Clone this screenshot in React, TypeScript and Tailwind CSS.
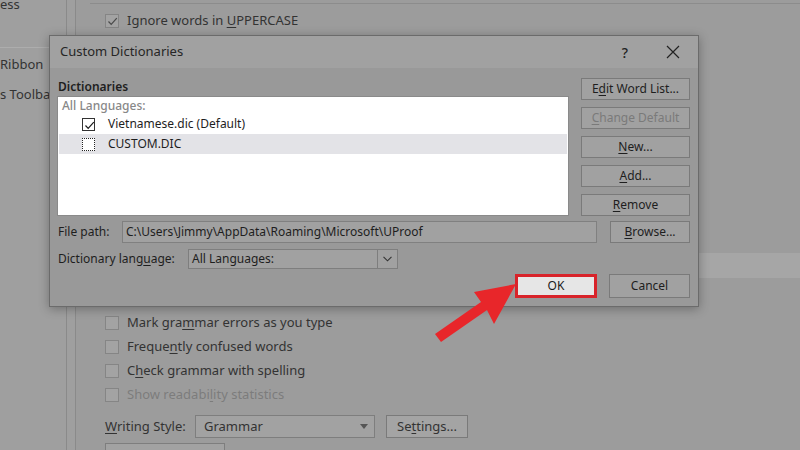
import React from "react";

function Check({ dim = false }: { dim?: boolean }) {
  return (
    <svg width="13" height="13" viewBox="0 0 13 13" className="absolute inset-0">
      <path d="M2.5 6.5 L5.2 9.4 L10.8 3.2" fill="none" stroke={dim ? "#4a4a4a" : "#1c1c1c"} strokeWidth="1.2" />
    </svg>
  );
}

function BgCheckbox({ checked = false }: { checked?: boolean }) {
  return (
    <span className="relative w-[14px] h-[14px] shrink-0 border border-[#858585] bg-[#a3a3a3]">
      {checked && <Check dim />}
    </span>
  );
}

function BgRow({ children, disabled = false }: { children: React.ReactNode; disabled?: boolean }) {
  return (
    <div className={`flex items-center gap-[8px] h-[24px] ${disabled ? "text-[#7c7c7c]" : "text-[#333333]"}`}>
      <BgCheckbox />
      <span>{children}</span>
    </div>
  );
}

function DlgButton({ children, disabled = false, className = "" }: { children: React.ReactNode; disabled?: boolean; className?: string }) {
  return (
    <div
      className={`flex items-center justify-center border border-[#7a7a7a] bg-[#a1a1a1] ${
        disabled ? "text-[#7a7a7a]" : "text-[#1e1e1e]"
      } ${className}`}
    >
      {children}
    </div>
  );
}

const U = ({ children }: { children: React.ReactNode }) => (
  <span className="underline underline-offset-[2px] decoration-1">{children}</span>
);

export default function App() {
  return (
    <div className="relative w-[800px] h-[450px] overflow-hidden bg-[#9c9c9c] text-[13px] text-[#333333] font-['Noto_Sans','Open_Sans',sans-serif]">
      {/* Word Options page behind the dialog */}
      <div className="flex h-full">
        <aside className="w-[67px] shrink-0 border-r border-[#8a8a8a] bg-[#9f9f9f] overflow-hidden">
          <div className="h-[48px] border-b border-[#adadad]">
            <div className="h-[10px] flex items-center">ess</div>
          </div>
          <div className="h-[30px] flex items-center mt-[2px]">Ribbon</div>
          <div className="h-[30px] flex items-center whitespace-nowrap">s Toolbar</div>
        </aside>
        <div className="w-[8px] shrink-0 bg-[#9f9f9f]" />
        <main className="flex-1 border-l border-[#8a8a8a]">
          <div className="ml-[14px] h-[4px] border-b border-[#8c8c8c]" />
          <div className="pl-[29px] mt-[5px]">
            <div className="flex items-center gap-[8px] h-[24px]">
              <BgCheckbox checked />
              <span>
                Ignore words in <U>U</U>PPERCASE
              </span>
            </div>
          </div>
          <div className="ml-[14px] mt-[220px] h-[25px] bg-[#a6a6a6]" />
          <div className="pl-[29px] mt-[33px]">
            <BgRow>
              Mark gra<U>m</U>mar errors as you type
            </BgRow>
            <BgRow>
              Freque<U>n</U>tly confused words
            </BgRow>
            <BgRow>
              C<U>h</U>eck grammar with spelling
            </BgRow>
            <BgRow disabled>
              Show readabi<U>l</U>ity statistics
            </BgRow>
            <div className="flex items-center h-[23px] mt-[8px]">
              <span className="w-[90px]">
                <U>W</U>riting Style:
              </span>
              <div className="w-[180px] h-[23px] border border-[#7e7e7e] bg-[#a2a2a2] flex items-center pl-[8px] pr-[6px]">
                <span className="flex-1">Grammar</span>
                <svg width="8" height="5" viewBox="0 0 8 5">
                  <path d="M0 0 H8 L4 5 Z" fill="#555555" />
                </svg>
              </div>
              <div className="ml-[11px] w-[82px] h-[23px] border border-[#7a7a7a] bg-[#a4a4a4] flex items-center justify-center">
                Se<U>t</U>tings...
              </div>
            </div>
            <div className="mt-[5px] w-[120px] h-[20px] border border-[#7e7e7e] bg-[#a2a2a2]" />
          </div>
        </main>
      </div>

      {/* Custom Dictionaries dialog */}
      <div className="absolute left-[49px] top-[35px] w-[650px] h-[272px] border border-[#6b6b6b] bg-[#999999] shadow-[0_2px_10px_rgba(0,0,0,0.3)] text-[12px] text-[#1e1e1e]">
        <div className="h-[32px] bg-[#a1a1a1] flex items-center pl-[10px] pr-[18px]">
          <span className="flex-1 text-[13px] text-[#262626]">Custom Dictionaries</span>
          <span className="text-[14px] font-medium text-[#222]">?</span>
          <svg width="14" height="14" viewBox="0 0 14 14" className="ml-[38px]">
            <path d="M1 1 L13 13 M13 1 L1 13" stroke="#222222" strokeWidth="1.2" />
          </svg>
        </div>

        <div className="px-[7px] pt-[10px]">
          <div className="flex gap-[12px]">
            <div className="w-[512px]">
              <div className="h-[18px] flex items-center font-semibold pl-[1px]">Dictionaries</div>
              <div className="h-[120px] bg-white border border-[#8a8a8a] p-[1px]">
                <div className="h-[16px] flex items-center pl-[3px] font-medium text-[#888888]">All Languages:</div>
                <div className="h-[20px] flex items-center pl-[23px] gap-[13px]">
                  <span className="relative w-[13px] h-[13px] border border-[#333333] bg-white">
                    <Check />
                  </span>
                  <span>Vietnamese.dic (Default)</span>
                </div>
                <div className="h-[20px] flex items-center pl-[23px] gap-[13px] bg-[#e3e3e7]">
                  <span className="w-[13px] h-[13px] border border-dotted border-[#222222] bg-white" />
                  <span>CUSTOM.DIC</span>
                </div>
              </div>
            </div>
            <div className="w-[109px] flex flex-col gap-[7px]">
              <DlgButton className="h-[22px]">
                E<U>d</U>it Word List...
              </DlgButton>
              <DlgButton className="h-[22px]" disabled>
                <U>C</U>hange Default
              </DlgButton>
              <DlgButton className="h-[22px]">
                <U>N</U>ew...
              </DlgButton>
              <DlgButton className="h-[22px]">
                <U>A</U>dd...
              </DlgButton>
              <DlgButton className="h-[22px]">
                <U>R</U>emove
              </DlgButton>
            </div>
          </div>

          <div className="flex items-center mt-[5px] h-[22px]">
            <span className="w-[65px] pl-[1px]">File path:</span>
            <div className="w-[475px] h-[22px] border border-[#808080] bg-[#a1a1a1] flex items-center pl-[3px]">
              C:\Users\Jimmy\AppData\Roaming\Microsoft\UProof
            </div>
            <DlgButton className="ml-[13px] w-[80px] h-[22px]">
              <U>B</U>rowse...
            </DlgButton>
          </div>

          <div className="flex items-center mt-[6px] h-[20px]">
            <span className="w-[131px] pl-[1px]">
              Dictionary lang<U>u</U>age:
            </span>
            <div className="w-[210px] h-[20px] border border-[#7e7e7e] bg-[#a1a1a1] flex items-center">
              <span className="flex-1 pl-[3px]">All Languages:</span>
              <div className="w-[20px] h-full border-l border-[#7e7e7e] flex items-center justify-center">
                <svg width="9" height="6" viewBox="0 0 9 6">
                  <path d="M0.5 0.8 L4.5 4.8 L8.5 0.8" fill="none" stroke="#333333" strokeWidth="1.1" />
                </svg>
              </div>
            </div>
          </div>

          <div className="flex justify-end gap-[12px] mt-[5px] pr-[1px]">
            <div className="w-[82px] h-[24px] border-[3px] border-[#d8232a] bg-[#e6e6e6] flex items-center justify-center text-[#1a1a1a]">
              OK
            </div>
            <DlgButton className="w-[81px] h-[24px]">Cancel</DlgButton>
          </div>
        </div>
      </div>

      {/* red pointer arrow */}
      <svg width="800" height="450" viewBox="0 0 800 450" className="absolute inset-0 pointer-events-none">
        <polygon
          points="435,334 481,302 474,292 516,284 494,324 487,310 441,342"
          fill="#e8262a"
        />
      </svg>
    </div>
  );
}
